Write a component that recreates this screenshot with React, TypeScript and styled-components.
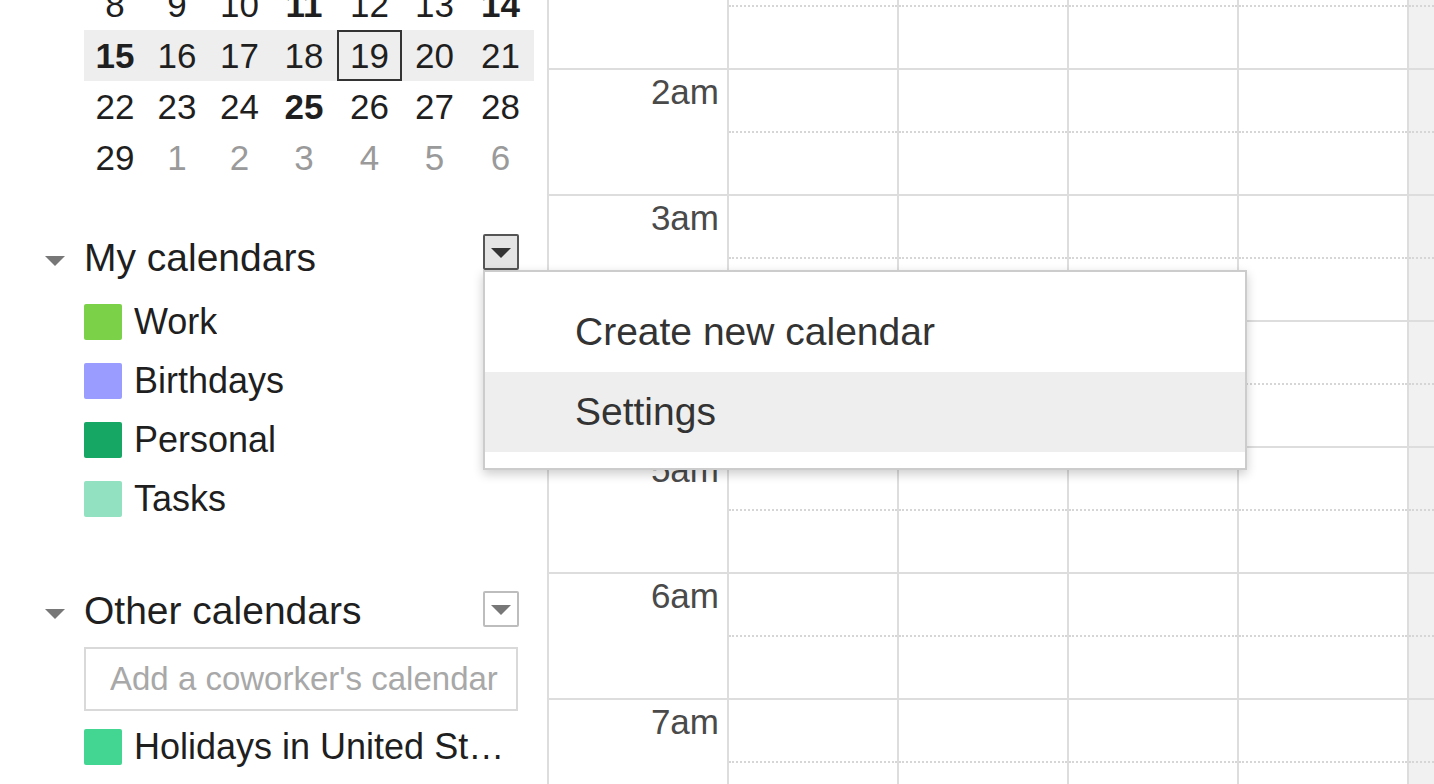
import React from 'react';
import styled, { createGlobalStyle } from 'styled-components';

const GlobalStyle = createGlobalStyle`
  html, body { margin: 0; padding: 0; background: #fff; }
  body { font-family: "Liberation Sans", Arial, Helvetica, sans-serif; color: #222; }
  * { box-sizing: border-box; }
`;

const Page = styled.div`
  display: flex;
  width: 1434px;
  height: 784px;
  overflow: hidden;
  background: #fff;
`;

/* ---------- Sidebar ---------- */
const Sidebar = styled.aside`
  width: 547px;
  flex: none;
  padding: 0 28px 0 45px;
  display: flex;
  flex-direction: column;
  position: relative;
  z-index: 2;
`;

const MiniCal = styled.div`
  margin-top: -21px;
  margin-left: 39px;
  width: 450px;
  display: flex;
  flex-direction: column;
`;

const WeekRow = styled.div<{ $current?: boolean }>`
  display: grid;
  grid-template-columns: 62px 62px 63px 66px 65px 65px 67px;
  height: 51px;
  background: ${(p) => (p.$current ? '#eeeeee' : 'transparent')};
`;

const DayCell = styled.div<{ $bold?: boolean; $muted?: boolean; $today?: boolean }>`
  display: flex;
  align-items: center;
  justify-content: center;
  font-size: 35px;
  font-weight: ${(p) => (p.$bold ? 700 : 400)};
  color: ${(p) => (p.$muted ? '#9a9a9a' : '#1f1f1f')};
  border: ${(p) => (p.$today ? '2px solid #333' : 'none')};
`;

const SectionHeader = styled.div<{ $mt: number }>`
  display: flex;
  align-items: center;
  height: 52px;
  margin-top: ${(p) => p.$mt}px;
`;

const Caret = styled.span`
  flex: none;
  width: 0;
  height: 0;
  border-left: 10px solid transparent;
  border-right: 10px solid transparent;
  border-top: 10px solid #777;
  margin-top: 6px;
`;

const SectionTitle = styled.div`
  flex: 1;
  margin-left: 19px;
  font-size: 39px;
  color: #1f1f1f;
  white-space: nowrap;
`;

const MenuAnchor = styled.div<{ $mt: number }>`
  position: relative;
  align-self: flex-start;
  margin-top: ${(p) => p.$mt}px;
`;

const MenuButton = styled.button<{ $open?: boolean }>`
  display: flex;
  align-items: center;
  justify-content: center;
  width: 36px;
  height: 36px;
  padding: 0;
  border-radius: 2px;
  border: 2px solid ${(p) => (p.$open ? '#555' : '#bdbdbd')};
  background: ${(p) => (p.$open ? '#e4e4e4' : '#fff')};
  &::after {
    content: '';
    width: 0;
    height: 0;
    margin-top: 2px;
    border-left: 10px solid transparent;
    border-right: 10px solid transparent;
    border-top: 10px solid ${(p) => (p.$open ? '#333' : '#777')};
  }
`;

const Menu = styled.div`
  position: absolute;
  top: 100%;
  left: 0;
  width: 764px;
  padding: 20px 0 16px;
  background: #fff;
  border: 2px solid #cccccc;
  box-shadow: 0 4px 10px rgba(0, 0, 0, 0.2);
  z-index: 10;
`;

const MenuItem = styled.div<{ $active?: boolean }>`
  display: flex;
  align-items: center;
  height: 80px;
  padding-left: 90px;
  font-size: 39px;
  color: #333;
  background: ${(p) => (p.$active ? '#eeeeee' : 'transparent')};
  white-space: nowrap;
`;

const CalList = styled.div<{ $mt: number }>`
  display: flex;
  flex-direction: column;
  margin-left: 39px;
  margin-top: ${(p) => p.$mt}px;
`;

const CalItem = styled.div`
  display: flex;
  align-items: center;
  gap: 12px;
  height: 59px;
  font-size: 36px;
  color: #1f1f1f;
`;

const Swatch = styled.span<{ $color: string }>`
  flex: none;
  width: 38px;
  height: 36px;
  border-radius: 2px;
  background: ${(p) => p.$color};
`;

const CalName = styled.span`
  max-width: 372px;
  white-space: nowrap;
  overflow: hidden;
  text-overflow: ellipsis;
`;

const AddInput = styled.input`
  margin: 10px 0 0 39px;
  width: 434px;
  height: 64px;
  border: 2px solid #d9d9d9;
  border-radius: 0;
  padding: 0 0 0 24px;
  font-family: inherit;
  font-size: 33px;
  color: #222;
  outline: none;
  &::placeholder {
    color: #a8a8a8;
  }
`;

/* ---------- Main grid ---------- */
const Main = styled.main`
  flex: 1;
  display: flex;
  border-left: 2px solid #dddddd;
  overflow: hidden;
`;

const GridBody = styled.div`
  flex: 1;
  display: flex;
  margin-top: -58px;
`;

const TimeColumn = styled.div`
  width: 178px;
  flex: none;
  display: flex;
  flex-direction: column;
`;

const HourLabel = styled.div`
  flex: none;
  height: 126px;
  border-top: 2px solid #dddddd;
  padding: 2px 8px 0 0;
  text-align: right;
  font-size: 35px;
  line-height: 40px;
  color: #4a4a4a;
`;

const DayColumn = styled.div<{ $shaded?: boolean }>`
  flex: ${(p) => (p.$shaded ? '1' : 'none')};
  width: ${(p) => (p.$shaded ? 'auto' : '170px')};
  display: flex;
  flex-direction: column;
  border-left: 2px solid #dddddd;
  background: ${(p) => (p.$shaded ? '#f1f1f1' : '#fff')};
`;

const HourSlot = styled.div`
  flex: none;
  height: 126px;
  border-top: 2px solid #dddddd;
`;

const HalfSlot = styled.div`
  height: 63px;
  border-bottom: 2px dotted #d6d6d6;
`;

type Day = { n: number; bold?: boolean; muted?: boolean; today?: boolean };

const weeks: { days: Day[]; current?: boolean }[] = [
  {
    days: [
      { n: 8 }, { n: 9 }, { n: 10 }, { n: 11, bold: true }, { n: 12 }, { n: 13 }, { n: 14, bold: true },
    ],
  },
  {
    current: true,
    days: [
      { n: 15, bold: true }, { n: 16 }, { n: 17 }, { n: 18 }, { n: 19, today: true }, { n: 20 }, { n: 21 },
    ],
  },
  {
    days: [
      { n: 22 }, { n: 23 }, { n: 24 }, { n: 25, bold: true }, { n: 26 }, { n: 27 }, { n: 28 },
    ],
  },
  {
    days: [
      { n: 29 }, { n: 1, muted: true }, { n: 2, muted: true }, { n: 3, muted: true },
      { n: 4, muted: true }, { n: 5, muted: true }, { n: 6, muted: true },
    ],
  },
];

const myCalendars = [
  { name: 'Work', color: '#7bd148' },
  { name: 'Birthdays', color: '#9a9cff' },
  { name: 'Personal', color: '#16a765' },
  { name: 'Tasks', color: '#92e1c0' },
];

const hours = ['1am', '2am', '3am', '4am', '5am', '6am', '7am', '8am'];
const dayCols = [0, 1, 2, 3, 4];

export default function App() {
  return (
    <>
      <GlobalStyle />
      <Page>
        <Sidebar>
          <MiniCal>
            {weeks.map((w, i) => (
              <WeekRow key={i} $current={w.current}>
                {w.days.map((d) => (
                  <DayCell key={`${i}-${d.n}`} $bold={d.bold} $muted={d.muted} $today={d.today}>
                    {d.n}
                  </DayCell>
                ))}
              </WeekRow>
            ))}
          </MiniCal>

          <SectionHeader $mt={49}>
            <Caret />
            <SectionTitle>My calendars</SectionTitle>
            <MenuAnchor $mt={2}>
              <MenuButton $open aria-label="My calendars options" />
              <Menu>
                <MenuItem>Create new calendar</MenuItem>
                <MenuItem $active>Settings</MenuItem>
              </Menu>
            </MenuAnchor>
          </SectionHeader>

          <CalList $mt={8}>
            {myCalendars.map((c) => (
              <CalItem key={c.name}>
                <Swatch $color={c.color} />
                <CalName>{c.name}</CalName>
              </CalItem>
            ))}
          </CalList>

          <SectionHeader $mt={57}>
            <Caret />
            <SectionTitle>Other calendars</SectionTitle>
            <MenuAnchor $mt={6}>
              <MenuButton aria-label="Other calendars options" />
            </MenuAnchor>
          </SectionHeader>

          <AddInput placeholder="Add a coworker's calendar" />

          <CalList $mt={6}>
            <CalItem>
              <Swatch $color="#42d692" />
              <CalName>Holidays in United States</CalName>
            </CalItem>
          </CalList>
        </Sidebar>

        <Main>
          <GridBody>
            <TimeColumn>
              {hours.map((h) => (
                <HourLabel key={h}>{h}</HourLabel>
              ))}
            </TimeColumn>
            {dayCols.map((c) => (
              <DayColumn key={c} $shaded={c === 4}>
                {hours.map((h) => (
                  <HourSlot key={h}>
                    <HalfSlot />
                  </HourSlot>
                ))}
              </DayColumn>
            ))}
          </GridBody>
        </Main>
      </Page>
    </>
  );
}
